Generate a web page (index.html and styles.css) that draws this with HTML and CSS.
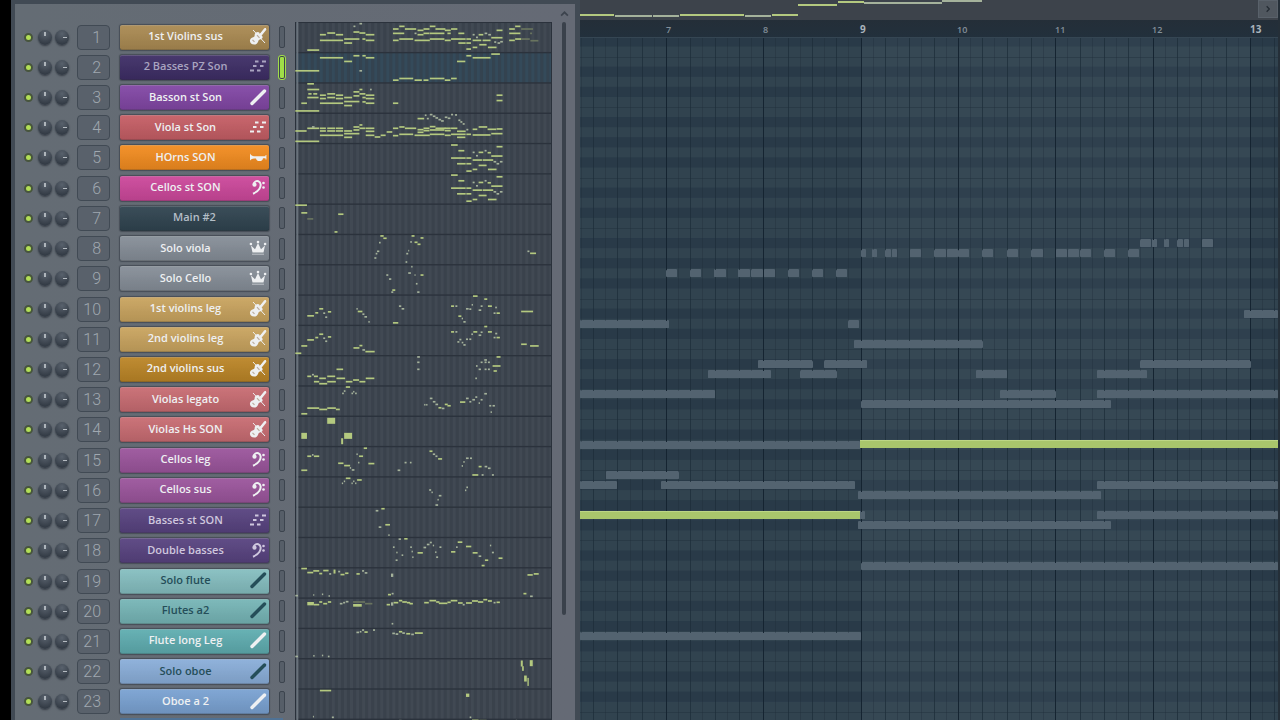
FILE: index.html
```html
<!DOCTYPE html>
<html lang="en">
<head>
<meta charset="utf-8">
<meta name="viewport" content="width=device-width, initial-scale=1">
<title>Channel rack and piano roll</title>
<link rel="stylesheet" href="styles.css">
</head>
<body>
<svg class="defs" aria-hidden="true">
  <symbol id="violin" viewBox="0 0 18 18">
    <path d="M4 3l12 13M5 14L17 1" stroke="currentColor" stroke-width="1" fill="none"/>
    <path d="M9.500 8.500L15.500 1l2 1.600L11.500 10z" fill="currentColor"/>
    <path d="M7 5.500c2-1.300 3.800-.3 3.800 1.400.8 1.300 2.900 1.300 2.900 3.400-.6 2-2.500 2-3.900 2.600-.6 1.500-1.300 4.400-4.300 4.700C2.300 17.700.6 15.500 1 13c.4-2.200 3-2.400 4.400-3.500.6-1.400-.3-2.800 1.600-4z" fill="currentColor"/>
    <path d="M3.500 12.800l2 2M8 8.200l2.500 2.600" stroke="#8a6a4a" stroke-opacity=".5" stroke-width="1.200"/>
  </symbol>
  <symbol id="steps" viewBox="0 0 18 18">
    <path d="M6 4.500h3.500M13 4.500h4M4 9h3.500M11 9h3.500M1 13.500h4M8 13.500h3.500" stroke="currentColor" stroke-width="2.200" fill="none"/>
  </symbol>
  <symbol id="stick" viewBox="0 0 18 18">
    <path d="M3 15.500L15.500 3" stroke="currentColor" stroke-width="3.400" stroke-linecap="round"/>
  </symbol>
  <symbol id="horn" viewBox="0 0 18 18">
    <path d="M1 5.500c1 2 2.500 2.500 4 2.700h11.500V7h.9v4.500h-.9v-1.300H14c-.5 2.300-1.500 2.800-3.500 2.800S7.500 12.400 7 10.500H5c-1.500.2-3 .8-4 2z" fill="currentColor"/>
  </symbol>
  <symbol id="clef" viewBox="0 0 18 18">
    <path d="M4.500 6.500C5 3.500 7.500 2.600 9.300 3.200c2.800 1 3 4.800 1.200 7.500-1.600 2.500-4 4-6.500 5" stroke="currentColor" stroke-width="2" fill="none"/>
    <circle cx="5.500" cy="6.700" r="2.100" fill="currentColor"/>
    <circle cx="14.500" cy="5" r="1.300" fill="currentColor"/>
    <circle cx="14.500" cy="9.500" r="1.300" fill="currentColor"/>
  </symbol>
  <symbol id="crown" viewBox="0 0 18 18">
    <path d="M3.500 13.500L2 6.500l4 3.800L9 4l3 6.300 4-3.800-1.500 7z" fill="currentColor"/>
    <path d="M3 15.200h12" stroke="currentColor" stroke-opacity=".6" stroke-width="1"/>
    <circle cx="1.900" cy="5" r="1.300" fill="currentColor"/>
    <circle cx="9" cy="3" r="1.300" fill="currentColor"/>
    <circle cx="16.100" cy="5" r="1.300" fill="currentColor"/>
  </symbol>
</svg>

<main class="workspace">
  <section class="rack" aria-label="Channel rack">
    <header class="rack-head">
      <button class="scroll-up" type="button" aria-label="Scroll up">
        <svg viewBox="0 0 8 5"><path d="M1 4l3-3 3 3" fill="none" stroke="currentColor" stroke-width="1.500"/></svg>
      </button>
    </header>
    <div class="rack-body">
      <ol class="channels" id="channels"></ol>
      <svg class="clips" id="clips" viewBox="15 66 774 2088" preserveAspectRatio="none" role="img" aria-label="Channel clips"></svg>
      <div class="scroll-track"><div class="scroll-bar"></div></div>
    </div>
  </section>

  <section class="roll" aria-label="Piano roll">
    <header class="overview">
      <svg class="overview-map" id="overview" viewBox="580 0 678 20" preserveAspectRatio="none"></svg>
      <button class="next" type="button" aria-label="Scroll right">
        <svg viewBox="0 0 6 10"><path d="M1 1l4 4-4 4" fill="none" stroke="currentColor" stroke-width="2"/></svg>
      </button>
    </header>
    <div class="ruler">
      <span></span><span>7</span><span>8</span><span class="major">9</span><span>10</span><span>11</span><span>12</span><span class="major">13</span>
    </div>
    <svg class="grid" id="grid" viewBox="580 38 698 682" preserveAspectRatio="none" role="img" aria-label="Notes"></svg>
  </section>
</main>
<script src="app.js"></script>
</body>
</html>
```
FILE: styles.css
```css
* { box-sizing: border-box; }

body {
  margin: 0;
  background: #000;
  font-family: "Open Sans", "Noto Sans", sans-serif;
  overflow: hidden;
}

button, input { margin: 0; padding: 0; border: 0; font: inherit; }

.defs { display: none; }

.workspace {
  display: grid;
  grid-template-columns: 569fr 700fr;
  min-height: 100vh;
  padding-left: 11px;
}

/* Channel rack */
.rack {
  display: flex;
  flex-direction: column;
  min-width: 0;
  background: linear-gradient(90deg, #646c74, #656a75);
  border: solid #414a54;
  border-width: 4px 5px 0 4px;
}

.rack-head {
  display: flex;
  justify-content: flex-end;
  height: 18px;
  padding: 7px 6px 0 0;
}

.scroll-up {
  width: 9px;
  height: 6px;
  background: none;
  color: #3c434d;
}

.scroll-up svg, .next svg { display: block; width: 100%; height: 100%; }

.rack-body {
  flex: 1;
  display: grid;
  grid-template-columns: 280px 1fr 23px;
}

.channels {
  display: grid;
  grid-template-rows: repeat(23, minmax(30px, 1fr)) 3px;
  margin: 0;
  padding: 0;
  list-style: none;
}

.channel {
  display: grid;
  grid-template-columns: 9px 14px 14px 33px 149px 6px;
  align-items: center;
  padding-left: 9px;
}

.led {
  appearance: none;
  width: 9px;
  height: 9px;
  border: 2px solid #47553d;
  border-radius: 50%;
  background: #b2df56;
}

.knob {
  appearance: none;
  width: 14px;
  height: 15px;
  border-radius: 50%;
  box-shadow: 0 1px 2px #353c45;
}
.knob::-webkit-slider-runnable-track { appearance: none; background: none; }
.knob::-webkit-slider-thumb { appearance: none; width: 1px; height: 1px; }
.pan {
  margin-left: 5px;
  background:
    linear-gradient(#aeb5bb, #aeb5bb) 6px 2px / 2px 4px no-repeat,
    radial-gradient(circle at 50% 25%, #59626d, #343c46 75%);
}
.volume {
  margin-left: 8px;
  background:
    linear-gradient(#b5bbc1, #b5bbc1) 8px 7px / 4px 1px no-repeat,
    radial-gradient(circle at 50% 25%, #59626d, #343c46 75%);
}

.number {
  width: 33px;
  height: 25px;
  margin-left: 16px;
  padding-right: 8px;
  border: 1px solid #414a54;
  border-radius: 4px;
  background: #59616b;
  color: #a0a8b0;
  font-family: Roboto, sans-serif;
  font-size: 16px;
  font-weight: 300;
  line-height: 24px;
  text-align: right;
}

.name {
  display: grid;
  grid-template-columns: 1fr 18px;
  align-items: center;
  height: 25px;
  margin-left: 26px;
  padding: 0 2px 2px;
  width: 149px;
  border-radius: 2px;
  border-top: 1px solid rgba(255, 255, 255, .22);
  border-bottom: 1px solid rgba(0, 0, 0, .25);
  box-shadow: 0 0 1px 1px rgba(40, 48, 58, .5);
  background: linear-gradient(rgba(255, 255, 255, .05), rgba(0, 0, 0, .1)) var(--tint);
  color: #eef0f2;
  font-size: 11px;
  font-weight: 600;
  line-height: 16px;
  text-align: center;
  white-space: nowrap;
}
.name svg { width: 18px; height: 18px; }
.name.muted { color: #a9a4c0; }
.name.soft { color: #cfc7de; }
.name.plain { grid-template-columns: 1fr; color: #b4bec7; }
.name.dark { color: #254e59; }

.violin-gold { --tint: #aa8a52; }
.night { --tint: #3e2e66; }
.purple { --tint: #8247a5; }
.red { --tint: #c55e65; }
.orange { --tint: #f28c20; }
.pink { --tint: #cc489b; }
.slate { --tint: #304450; }
.grey { --tint: #868e98; }
.sand { --tint: #c9a45f; }
.amber { --tint: #bb8527; }
.rose { --tint: #c86c72; }
.orchid { --tint: #9b559c; }
.indigo { --tint: #584380; }
.mint { --tint: #85bec0; }
.seafoam { --tint: #76b5b6; }
.teal { --tint: #5fadb0; }
.sky { --tint: #8aaed9; }
.blue { --tint: #7aa2d2; }

.select {
  width: 6px;
  height: 22px;
  margin-left: 36px;
  border: 1px solid #3c444e;
  border-radius: 2px;
  background: #565e68;
}
.select.on {
  height: 23px;
  background: #a0de48;
  outline: 1px solid #a0de48;
}

.next-channel {
  height: 2px;
  margin: 1px 12px 0 105px;
  background: #4f7295;
}

.clips { width: 100%; height: 0; min-height: 100%; }
.lane { fill: #414953; }
.lane.active { fill: #344a5a; }
.lane-stripe { fill: #333b46; fill-opacity: .5; }
.lane-line { fill: #2b323c; }
.lane-edge { fill: #69727b; }
.clip { fill: #b4c97f; }
.clip.pale { fill: #a5b29b; }
.clip.dim { fill: #69745f; }

.scroll-track {
  display: flex;
  justify-content: center;
  align-items: flex-start;
}
.scroll-bar {
  width: 4px;
  height: 85%;
  border-radius: 2px;
  background: #3a414b;
}

/* Piano roll */
.roll {
  display: flex;
  flex-direction: column;
  min-width: 0;
  padding-right: 2px;
  background: #252f38;
}

.overview {
  display: grid;
  grid-template-columns: 1fr 20px;
  height: 20px;
  background: #3d434b;
}
.overview-map { width: 100%; height: 20px; }

.next {
  height: 18px;
  padding: 4px 7px;
  border: 1px solid #59616a;
  background: #50575f;
  color: #252c34;
}

.ruler {
  display: grid;
  grid-template-columns: 86fr 97fr 97fr 97fr 98fr 97fr 98fr 28fr;
  height: 18px;
  background: linear-gradient(#242e38, #22303c);
  border-bottom: 1px solid #354653;
  color: #84909a;
  font-size: 9px;
  font-weight: 600;
  line-height: 19px;
}
.ruler .major { color: #a9b3bb; font-size: 10px; font-weight: 700; }

.grid { flex: 1; width: 100%; height: 0; min-height: 640px; }
.base { fill: #31434f; }
.sharp { fill: #293a48; }
.phrase { fill: #6c8190; fill-opacity: .09; }
.rule { fill: #1e2d39; }
.rule.bar { fill: #152431; }
.rule.beat { fill-opacity: .75; }
.rule.half { fill-opacity: .32; }
.rule.octave { fill-opacity: .4; }
.ghost { fill: #536370; }
.note { fill: #a9c66c; }
.note-top { fill: #bdd685; }
```
FILE: app.js
```js
const SVG = "http://www.w3.org/2000/svg";

function rect(parent, cls, x, y, w, h, rx) {
  const r = document.createElementNS(SVG, "rect");
  r.setAttribute("class", cls);
  r.setAttribute("x", x);
  r.setAttribute("y", y);
  r.setAttribute("width", w);
  r.setAttribute("height", h);
  if (rx) r.setAttribute("rx", rx);
  parent.appendChild(r);
}

/* name, colour class, icon, text class */
const channels = [
  ["1st Violins sus", "violin-gold", "violin"],
  ["2 Basses PZ Son", "night", "steps", "muted"],
  ["Basson st Son", "purple", "stick"],
  ["Viola st Son", "red", "steps"],
  ["HOrns SON", "orange", "horn"],
  ["Cellos st SON", "pink", "clef"],
  ["Main #2", "slate", "", "plain"],
  ["Solo viola", "grey", "crown"],
  ["Solo Cello", "grey", "crown"],
  ["1st violins leg", "sand", "violin"],
  ["2nd violins leg", "sand", "violin"],
  ["2nd violins sus", "amber", "violin"],
  ["Violas legato", "rose", "violin"],
  ["Violas Hs SON", "rose", "violin"],
  ["Cellos leg", "orchid", "clef"],
  ["Cellos sus", "orchid", "clef"],
  ["Basses st SON", "indigo", "steps", "soft"],
  ["Double basses", "indigo", "clef", "soft"],
  ["Solo flute", "mint", "stick", "dark"],
  ["Flutes a2", "seafoam", "stick", "dark"],
  ["Flute long Leg", "teal", "stick"],
  ["Solo oboe", "sky", "stick", "dark"],
  ["Oboe a 2", "blue", "stick"]
];

const list = document.getElementById("channels");
list.innerHTML = channels.map(([name, tint, icon, tone], i) => `
  <li class="channel">
    <input class="led" type="checkbox" checked aria-label="${name} enabled">
    <input class="knob pan" type="range" aria-label="${name} panning">
    <input class="knob volume" type="range" aria-label="${name} volume">
    <span class="number">${i + 1}</span>
    <button class="name ${tint} ${tone || ""}" type="button"><span>${name}</span>${
      icon ? `<svg aria-hidden="true"><use href="#${icon}"/></svg>` : ""}</button>
    <button class="select ${i === 1 ? "on" : ""}" type="button" aria-label="Select ${name}"></button>
  </li>`).join("") + '<li class="next-channel"></li>';

/* Clip notes as x,centre,width[,height]; each block has its own vertical origin. */
const brass = "485,434,20 507,451,18 485,473,44 531,473,15 503,490,26 531,490,15 531,512,16 550,456,6 560,466,6 550,479,28 550,507,14 568,456,14 586,451,6 595,457,10 568,495,24 580,479,32 596,507,26 606,467,34 613,484,8 622,490,8 632,484,8 622,439,18";
const clipBlocks = [
  [0, "52,150,36 90,104,18 112,99,24 138,104,22 90,121,70 163,129,24 163,117,46 191,96,18 209,99,18 209,71,8 191,79,6 228,104,26 228,121,26 218,117,9 310,87,17 329,79,16 346,87,34 310,100,34 310,121,17 329,117,42 375,121,46 375,100,6 384,91,18 384,104,18 402,87,18 402,100,18 421,79,17 438,87,30 421,100,44 421,117,44 466,91,18 466,121,18 474,100,10 485,87,19 485,117,44 507,100,18 507,129,22 531,117,14 531,129,14 531,147,14 550,104,6 550,121,26 550,142,14 560,112,6 568,104,14 586,100,8 570,134,22 580,121,24 597,104,8 596,142,26 606,113,34 615,126,6 625,129,8 633,125,8 622,91,18 660,100,34 660,121,17 678,117,18 660,87,17 678,79,16"],
  [0, "16,212,72 90,173,70 163,184,24 191,167,18 209,212,8 218,167,10 228,173,26 310,240,17 329,235,42 375,240,22 402,240,15 421,235,44 466,240,17 485,235,17 503,184,25 531,167,15 550,173,54 606,162,26"],
  [0, "52,251,20 52,268,36 34,309,17 55,281,10 70,281,12 52,292,34 16,332,72 90,285,18 90,295,18 90,309,70 112,281,24 112,292,24 138,285,22 138,295,22 163,292,24 163,304,46 163,316,24 191,275,18 191,287,18 209,268,9 209,281,18 218,292,10 218,305,10 228,285,26 228,295,26 228,309,26 241,268,5 310,309,16 622,285,18 622,301,18"],
  [0, "16,392,34 52,384,36 16,423,72 66,380,8 90,384,18 90,392,18 90,405,70 112,384,24 112,392,24 138,384,22 138,392,22 163,392,24 163,400,46 163,411,24 191,380,18 191,389,18 209,374,9 209,384,18 228,384,26 228,393,26 228,405,26 255,410,17 273,405,15 291,395,17 310,384,16 310,406,16 329,380,16 329,402,42 346,384,34 384,355,20 375,405,46 384,388,18 384,396,18 402,384,18 402,391,18 421,379,17 421,389,44 421,402,44 438,384,30 466,384,18 466,391,18 466,405,18 485,384,19 485,402,44 503,393,26 503,411,25 531,388,6 531,402,14 550,387,14 568,380,26 550,404,54 595,387,26 606,400,34 622,386,18 406,345,5 412,355,6 421,343,8 430,348,8 438,353,8 447,358,8 455,362,8 466,351,8 475,354,8 485,343,6 497,344,6 507,360,6 513,365,6 520,371,6"],
  [0, brass],
  [90, brass],
  [540, "16,74,35 34,97,18 145,101,16 134,154,9"],
  [540, "272,166,10 281,173,10 268,186,5 262,212,7 258,219,5 254,232,6 366,166,9 362,184,5 375,185,9 384,191,9 393,172,9 356,210,3 350,219,6 348,244,5 715,212,6 723,218,18"],
  [540, "365,258,4 356,277,8 290,283,6 298,295,7 308,328,9 305,334,6 375,283,3 393,283,9 379,309,5 383,334,7"],
  [540, "551,346,14 585,355,9 52,405,20 76,396,9 88,384,12 100,397,6 106,409,6 114,393,10 200,384,4 204,392,14 218,400,6 224,408,8 236,423,4 328,376,7 336,384,8 310,426,16 485,376,9 498,376,6 530,384,8 540,385,6 547,372,4 507,406,9 517,413,4 522,423,7 568,388,8 574,376,6 596,376,12 618,380,5 613,397,6 622,397,10 696,392,36"],
  [540, "16,517,18 34,495,18 52,477,20 76,470,9 88,460,12 100,472,6 106,481,6 114,468,10 191,501,18 209,494,9 218,507,8 227,512,28 485,453,9 498,453,6 504,483,6 510,476,6 517,485,5 522,492,7 530,475,6 540,475,6 546,460,5 552,453,12 568,463,8 574,454,6 585,437,9 596,453,12 618,458,6 613,470,6 622,470,10 696,490,17 723,495,26"],
  [1080, "383,-12,8 622,-12,12 585,-3,8 383,4,7 383,25,7 140,25,20 52,46,12 66,41,6 72,46,12 88,52,20 112,46,24 72,62,16 88,68,24 112,62,26 140,52,26 168,62,20 190,57,18 209,62,18 228,52,26 574,4,6 586,4,6 596,4,6 560,15,5 610,15,24 568,25,7 586,25,6 596,25,6 613,30,10 558,52,5"],
  [1080, "168,78,13 162,90,5 157,97,5 185,97,5 190,92,4 196,97,5 34,158,18 52,141,36 88,145,24 112,141,26 138,145,12 404,131,4 410,131,4 421,112,8 430,122,8 438,130,8 447,140,9 457,142,8 466,130,9 474,134,10 512,123,16 530,112,8 540,122,6 549,116,8 558,108,6 568,126,4 574,116,6 585,98,8 600,134,6 610,134,7 604,153,4"],
  [1080, "112,179,24,18 34,224,17,18 163,224,24,18 154,240,6,18"],
  [1080, "222,261,10 200,279,4 208,285,12 52,285,12 66,281,5 72,285,16 34,327,18 145,306,16 163,313,18 180,320,4 186,326,8 205,304,4 236,307,18 324,327,8 345,304,6 361,304,5 420,270,9 430,279,7 438,285,6 446,293,12 530,291,8 542,291,6 522,302,4 517,314,4 568,316,9 586,316,8 596,321,8 549,341,18 577,341,6 608,341,6"],
  [1080, "168,351,14 162,360,4 156,366,4 185,366,4 190,360,4 196,366,4 202,356,14 419,386,6 426,393,4 448,403,8 444,415,4 438,431,8 531,378,5 527,387,4"],
  [1080, "275,442,10 258,448,8 267,497,8 287,490,14 296,521,4"],
  [1620, "327,-7,7 344,-8,10 310,17,5 320,33,4 318,56,6 336,41,5 362,17,5 366,30,4 368,47,4 384,34,16 402,18,8 412,9,8 421,3,6 430,12,4 437,32,4 440,47,6 450,17,6 485,31,13 500,17,5 505,2,14 530,15,16 550,34,15 568,44,8 587,56,10 577,72,9 602,12,4 608,33,6 628,50,12"],
  [1620, "34,81,17 52,93,18 70,88,18 88,96,9 100,87,16 118,97,6 131,90,6,12 145,90,6 152,99,12 166,95,10 200,97,10 217,88,6 225,94,8 304,101,7,10 16,162,8 70,160,3 96,158,4 116,163,4 295,159,9 306,156,6 715,100,16 734,97,15 703,156,9 723,164,8"],
  [1620, "52,186,20,10 72,189,16 88,181,9 100,186,12 114,181,10 150,186,8 160,183,6 168,180,8 190,191,26,8 291,189,10 304,187,7,10 312,183,14 328,177,10 338,181,14 352,183,10 360,186,10 404,183,14 420,177,20 440,181,10 448,185,26 474,182,10 484,177,20 506,184,14 520,189,6 530,184,18 548,178,18 566,181,16 582,174,12 596,178,12 613,183,6 622,182,10 306,246,5"],
  [1620, "200,272,8 210,270,5 217,265,6 224,271,10 250,265,6 308,275,8 318,277,8 328,270,10 338,274,8 350,276,12 365,278,8 376,274,24 16,344,8 70,342,4 96,341,4 114,344,5"],
  [1620, "695,365,6,18 699,380,5,14 722,364,9,18 705,410,8,18 715,420,4,24"],
  [1620, "90,446,34 530,460,10,10 126,526,6 69,524,3 541,526,5 328,536,8 548,535,20 570,536,22 680,536,4"]
];
const dimClips = "696,87,36 696,117,26 724,122,24 723,100,6 52,655,18 190,1801,36 226,1806,22";

const clips = document.getElementById("clips");
const laneHeight = 90.65;
for (let i = 0; i < 24; i++) {
  rect(clips, i === 1 ? "lane active" : "lane", 15, 66 + i * laneHeight, 774, laneHeight + 1);
}
for (let x = 26; x < 780; x += 18.2) rect(clips, "lane-stripe", x, 66, 9, 2100);
for (let i = 0; i < 24; i++) rect(clips, "lane-line", 15, 65 + i * laneHeight, 774, 4);
rect(clips, "lane-line", 15, 66, 3, 2100);
rect(clips, "lane-edge", 19, 66, 6, 2100);
rect(clips, "lane-line", 786, 66, 3, 2100);

function drawClips(text, top, cls) {
  for (const item of text.split(" ")) {
    const [x, y, w, h = 5] = item.split(",").map(Number);
    rect(clips, cls || (w < 9 && h < 12 ? "clip pale" : "clip"), x, y + top - h / 2, w, h);
  }
}
clipBlocks.forEach(([top, text]) => drawClips(text, top));
drawClips(dimClips, 0, "clip dim");

/* Overview strip */
const overview = document.getElementById("overview");
[[580, 14, 34], [615, 15, 37, 1], [653, 15, 26, 1], [680, 14, 64], [745, 15, 26, 1], [772, 14, 26],
 [798, 4, 39], [838, 1, 26], [864, 2, 78, 1], [942, 0, 40, 1]].forEach(([x, y, w, pale]) =>
  rect(overview, pale ? "clip pale" : "clip", x, y, w, 2));

/* Piano roll grid: twelve semitones per octave, counted down from B */
const grid = document.getElementById("grid");
const step = 10.08;
rect(grid, "base", 580, 38, 698, 682);
for (let k = -7; k < 61; k++) {
  const y = 107 + k * step;
  const tone = (k + 12) % 12;
  if ([1, 3, 5, 8, 10].includes(tone)) rect(grid, "sharp", 580, y, 698, step);
}
rect(grid, "phrase", 861, 38, 389, 682);
for (let k = -7; k < 61; k++) {
  const tone = (k + 12) % 12;
  if (tone === 0 || tone === 7) rect(grid, "rule octave", 580, Math.round(107 + k * step), 698, 1);
}

const ghosts = {
  243: "1140,11 1152,5 1164,5 1177,6 1184,5 1202,11",
  253: "861,5 872,5 885,6 892,5 910,11 934,12 947,11 958,11 982,11 1007,11 1031,12 1056,11 1068,11 1080,11 1104,11 1128,11",
  273: "666,11 690,11 714,12 738,12 751,12 764,11 788,11 812,11 836,11",
  314: "1244,34",
  324: "580,89 848,11",
  344: "854,129",
  364: "758,55 824,43 1140,111",
  374: "708,63 800,37 976,31 1097,50",
  394: "580,135 1000,56 1097,181",
  404: "861,250",
  445: "580,280",
  475: "606,73",
  485: "580,37 661,194 1097,181",
  495: "858,243",
  515: "858,7 1097,181",
  525: "858,253",
  566: "861,417",
  636: "580,281"
};
for (const [y, row] of Object.entries(ghosts)) {
  for (const item of row.split(" ")) {
    const [x, w] = item.split(",").map(Number);
    rect(grid, "ghost", x, y - 4, w, 8, 1);
  }
}
for (let n = -7; n < 51; n++) {
  const kind = n % 8 === 0 ? "bar" : n % 2 === 0 ? "beat" : "half";
  const x = Math.round(666 + n * 12.165);
  rect(grid, "rule " + kind, x, 38, 1, 682);
}
/* Notes of other channels stay visible through the rules */
for (const [y, row] of Object.entries(ghosts)) {
  for (const item of row.split(" ")) {
    const [x, w] = item.split(",").map(Number);
    const r = y - 4;
    rect(grid, "ghost", x, r + 1, w, 7, 1);
  }
}
[[860, 440, 418], [580, 511, 280]].forEach(([x, y, w]) => {
  rect(grid, "note", x, y, w, 8);
  rect(grid, "note-top", x, y, w, 1);
});
```
